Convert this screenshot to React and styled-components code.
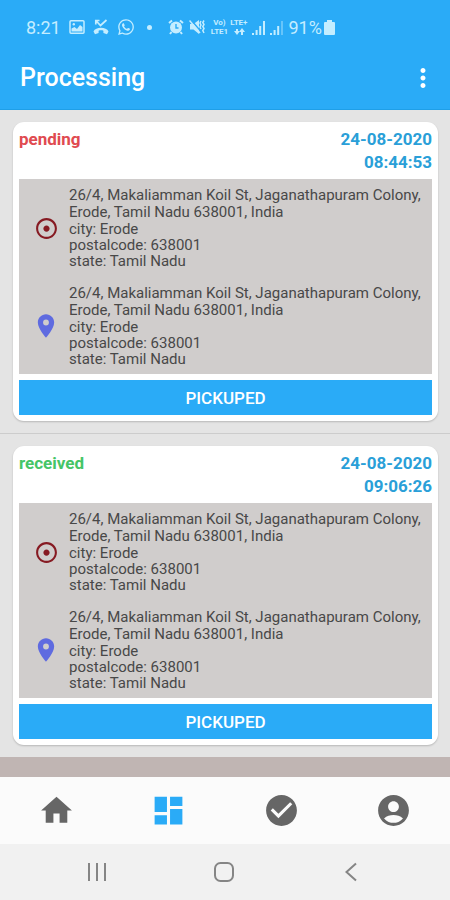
import React from 'react'
import styled, { createGlobalStyle } from 'styled-components';
import {
  MdMoreVert,
  MdAdjust,
  MdLocationOn,
  MdHome,
  MdDashboard,
  MdCheckCircle,
  MdAccountCircle,
} from 'react-icons/md';
import { FaWhatsapp } from 'react-icons/fa';

const address = {
  street: '26/4, Makaliamman Koil St, Jaganathapuram Colony, Erode, Tamil Nadu 638001, India',
  city: 'Erode',
  postalcode: '638001',
  state: 'Tamil Nadu',
};

const orders = [
  { id: 1, status: 'pending', date: '24-08-2020', time: '08:44:53', from: address, to: address },
  { id: 2, status: 'received', date: '24-08-2020', time: '09:06:26', from: address, to: address },
];

const statusColors = {
  pending: '#e04a50',
  received: '#45c566',
};

const tabs = [
  { label: 'Home', icon: MdHome },
  { label: 'Processing', icon: MdDashboard, active: true },
  { label: 'Completed', icon: MdCheckCircle },
  { label: 'Account', icon: MdAccountCircle },
];

const PictureIcon = () => (
  <svg width="16" height="16" viewBox="0 0 16 16" fill="none" stroke="currentColor">
    <rect x="1" y="1.8" width="14" height="12.4" rx="1" strokeWidth="1.5" />
    <path d="M2.500 12.500V9.500l3-1.500 2.500 2 3-4 2.500 2v4.500z" fill="currentColor" stroke="none" />
    <circle cx="4.800" cy="5.300" r="1.200" fill="currentColor" stroke="none" />
  </svg>
);

const MissedCallIcon = () => (
  <svg width="16" height="16" viewBox="0 0 16 16" fill="none" stroke="currentColor">
    <path d="M2.800 1.500L7.500 6.500l6-5.500M2.800 5.500v-4h3.700" strokeWidth="1.700" />
    <path d="M.5 12.500C2.500 7.500 13.500 7.500 15.500 12.500L14 15.300l-3.600-1.300v-2.300c-1.500-.5-3.300-.5-4.800 0V14L2 15.300z" fill="currentColor" stroke="none" />
  </svg>
);

const AlarmIcon = () => (
  <svg width="16" height="16" viewBox="0 0 16 16" fill="none" stroke="currentColor">
    <circle cx="8" cy="8.5" r="6" fill="currentColor" stroke="none" />
    <path d="M1 4l3-2.5M15 4l-3-2.5M3.5 13L2 15M12.5 13L14 15" strokeWidth="2" />
    <path d="M8 5v4h2.5" stroke="#2aabf7" strokeWidth="1.4" />
  </svg>
);

const VibrateIcon = () => (
  <svg width="17" height="16" viewBox="0 0 17 16" fill="none" stroke="currentColor">
    <path d="M1 5h3.500L10 1v14l-5.500-4.500H1z" fill="currentColor" stroke="none" />
    <path d="M2 1l10 11.500" stroke="#2aabf7" strokeWidth="1.500" />
    <path d="M.5 1.500l10.500 12.500" strokeWidth="1.500" />
    <path d="M12 2l-1 2 1 2-1 2 1 2M15 1.500l-1.200 2 1.200 2-1.200 2 1.200 2-1.200 2 1.200 2.500" strokeWidth="1.500" />
  </svg>
);

const DataArrows = () => (
  <svg width="14" height="7" viewBox="0 0 14 7" fill="currentColor">
    <path d="M4 1h2v2h2L5 7 2 3h2zM9 7h2V4h2l-3-4-3 4h2z" />
  </svg>
);

const SignalIcon = ({ weak }) => (
  <svg width="13" height="15" viewBox="0 0 13 15" fill="currentColor">
    <path d="M0 13h2v2H0zM3.600 10h2v5h-2zM7.200 6h2v9h-2z" />
    <path d="M11 1h2v14h-2z" opacity={weak ? 0.4 : 1} />
  </svg>
);

const BatteryIcon = () => (
  <svg width="11" height="15" viewBox="0 0 11 15" fill="currentColor">
    <path d="M3 0h5v2h2a1 1 0 0 1 1 1v11a1 1 0 0 1-1 1H1a1 1 0 0 1-1-1V3a1 1 0 0 1 1-1h2z" />
  </svg>
);

const Address = ({ value, icon }) => (
  <Stop>
    <Marker>{icon}</Marker>
    <Lines>
      <p className='street'>{value.street}</p>
      <p>city: {value.city}</p>
      <p>postalcode: {value.postalcode}</p>
      <p>state: {value.state}</p>
    </Lines>
  </Stop>
);

const Order = ({ order }) => (
  <OrderItem>
    <Card>
      <CardHeader>
        <Status $color={statusColors[order.status]}>{order.status}</Status>
        <DateTime>
          <span>{order.date}</span>
          <span>{order.time}</span>
        </DateTime>
      </CardHeader>
      <Route>
        <Address value={order.from} icon={<MdAdjust size={25} color="#861a22" />} />
        <Address value={order.to} icon={<MdLocationOn size={28} color="#5f6be0" />} />
      </Route>
      <PickupButton type="button">PICKUPED</PickupButton>
    </Card>
  </OrderItem>
);

const App = () => {
  return (
    <Screen>
      <GlobalStyle />
      <StatusBar>
        <StatusGroup $gap={8}>
          <span>8:21</span>
          <PictureIcon />
          <MissedCallIcon />
          <FaWhatsapp size={18} />
          <Dot />
        </StatusGroup>
        <StatusGroup $gap={5}>
          <AlarmIcon />
          <VibrateIcon />
          <Network>
            <span>Vo)</span>
            <span>LTE+</span>
            <span>LTE1</span>
            <DataArrows />
          </Network>
          <SignalIcon />
          <SignalIcon weak />
          <Battery>91%<BatteryIcon /></Battery>
        </StatusGroup>
      </StatusBar>
      <AppBar>
        <h1>Processing</h1>
        <MenuButton type="button" aria-label="More options">
          <MdMoreVert size={30} />
        </MenuButton>
      </AppBar>
      <Content>
        <OrderList>
          {orders.map((order) => (
            <Order key={order.id} order={order} />
          ))}
        </OrderList>
      </Content>
      <TabBar>
        {tabs.map(({ label, icon: Icon, active }) => (
          <Tab key={label} type="button" aria-label={label} $active={active}>
            <Icon size={37} />
          </Tab>
        ))}
      </TabBar>
      <SystemBar>
        <SystemButton type="button" aria-label="Recent apps">
          <svg width="22" height="22" viewBox="0 0 22 22" fill="none" stroke="currentColor" strokeWidth="2">
            <path d="M3 2v18M11 2v18M19 2v18" />
          </svg>
        </SystemButton>
        <SystemButton type="button" aria-label="Home screen">
          <svg width="22" height="22" viewBox="0 0 22 22" fill="none" stroke="currentColor" strokeWidth="2">
            <rect x="2" y="2" width="18" height="18" rx="5.5" />
          </svg>
        </SystemButton>
        <SystemButton type="button" aria-label="Back">
          <svg width="22" height="22" viewBox="0 0 22 22" fill="none" stroke="currentColor" strokeWidth="2">
            <path d="M16 2.500l-9.500 8.500 9.500 8.500" />
          </svg>
        </SystemButton>
      </SystemBar>
    </Screen>
  )
}

const GlobalStyle = createGlobalStyle`
  * {
    box-sizing: border-box;
  }
  body {
    margin: 0;
    font-family: Roboto, "Liberation Sans", sans-serif;
  }
  h1, p, ul {
    margin: 0;
    padding: 0;
  }
  button {
    border: none;
    padding: 0;
    background: none;
    font-family: inherit;
    cursor: pointer;
  }
  svg {
    display: block;
    flex-shrink: 0;
  }
`

const Screen = styled.div`
  display: flex;
  flex-direction: column;
  min-height: 100vh;
`

const StatusBar = styled.div`
  display: flex;
  align-items: center;
  gap: 16px;
  height: 54px;
  padding: 0 26px;
  background: #2aabf7;
  color: #c4edff;
  font-size: 18px;
`

const StatusGroup = styled.div`
  display: flex;
  align-items: center;
  gap: ${({ $gap }) => $gap}px;
`

const Dot = styled.i`
  width: 5px;
  height: 5px;
  margin-left: 4px;
  border-radius: 50%;
  background: currentColor;
`

const Network = styled.div`
  display: grid;
  grid-template-columns: auto auto;
  align-items: center;
  justify-items: center;
  column-gap: 2px;
  font-size: 8px;
  font-weight: 700;
  line-height: 9px;
`

const Battery = styled.div`
  display: flex;
  align-items: center;
  gap: 2px;
`

const AppBar = styled.header`
  display: flex;
  align-items: center;
  justify-content: space-between;
  height: 56px;
  padding: 0 12px 8px 20px;
  background: #2aabf7;
  border-bottom: 1px solid #1f9fe8;
  color: white;
  h1 {
    font-size: 25px;
    font-weight: 500;
  }
`

const MenuButton = styled.button`
  color: white;
`

const Content = styled.main`
  flex: 1;
  padding-bottom: 20px;
  background: #c0b5b3;
`

const OrderList = styled.ul`
  list-style: none;
`

const OrderItem = styled.li`
  padding: 12px 12px 12px 13px;
  background: #e4e4e4;
  & + & {
    border-top: 1px solid #cccccc;
  }
`

const Card = styled.article`
  padding: 6px;
  border-radius: 11px;
  background: white;
  box-shadow: 0 1px 2px rgba(0, 0, 0, 0.2);
`

const CardHeader = styled.div`
  display: flex;
  justify-content: space-between;
  margin-bottom: 5px;
  font-size: 17px;
  font-weight: 700;
  line-height: 23px;
`

const Status = styled.span`
  color: ${({ $color }) => $color};
`

const DateTime = styled.div`
  display: flex;
  flex-direction: column;
  align-items: flex-end;
  color: #2a9fd8;
`

const Route = styled.div`
  display: flex;
  flex-direction: column;
  gap: 16px;
  padding: 8px 0 7px;
  background: #d0cdcc;
`

const Stop = styled.div`
  display: flex;
  align-items: center;
`

const Marker = styled.div`
  display: flex;
  justify-content: center;
  flex-shrink: 0;
  width: 50px;
  padding-left: 4px;
`

const Lines = styled.div`
  flex: 1;
  color: #484848;
  font-size: 15px;
  line-height: 16px;
  .street {
    line-height: 17px;
  }
`

const PickupButton = styled.button`
  display: block;
  width: 100%;
  height: 35px;
  margin-top: 6px;
  background: #2aabf7;
  color: white;
  font-size: 17px;
  font-weight: 500;
`

const TabBar = styled.nav`
  display: flex;
  height: 67px;
  background: #fbfbfb;
`

const Tab = styled.button`
  display: flex;
  flex: 1;
  align-items: center;
  justify-content: center;
  color: ${({ $active }) => ($active ? '#2aabf7' : '#666666')};
`

const SystemBar = styled.div`
  display: flex;
  height: 56px;
  padding: 0 36px 0 34px;
  background: #f1f1f1;
`

const SystemButton = styled.button`
  display: flex;
  flex: 1;
  align-items: center;
  justify-content: center;
  color: #858585;
`

export default App
